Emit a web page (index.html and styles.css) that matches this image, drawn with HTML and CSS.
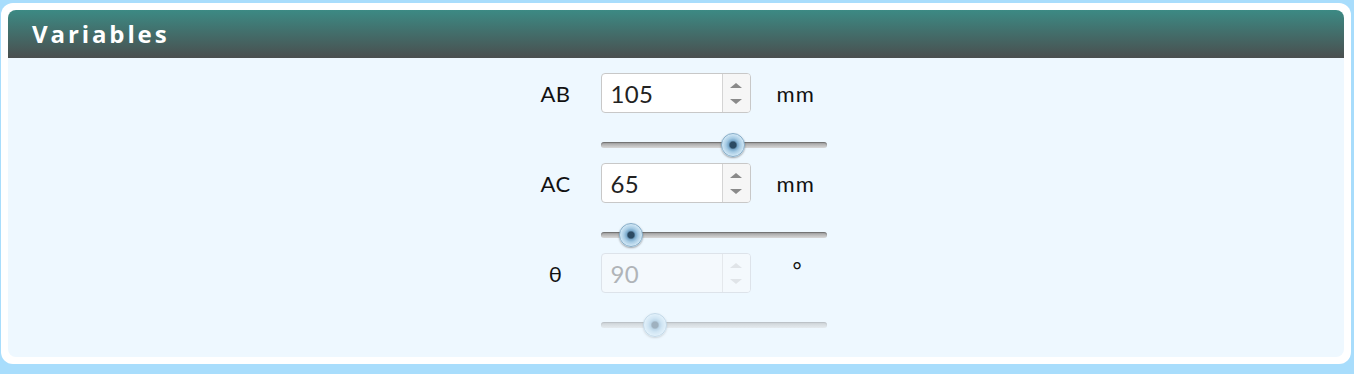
FILE: index.html
```html
<!DOCTYPE html>
<html lang="en">

<head>
    <meta charset="UTF-8">
    <title>Variables</title>
    <link rel="stylesheet" href="styles.css">
</head>

<body>

    <div class="card">
        <div class="card-header">Variables</div>
        <div class="card-body">
            <div class="vars">
                <!-- AB -->
                <div class="label">AB</div>
                <div class="num">
                    <input class="num-input" type="text" value="105">
                    <div class="spin"><span class="up"></span><span class="down"></span></div>
                </div>
                <div class="unit">mm</div>
                <div class="slider-cell">
                    <input class="slider" type="range" min="0" max="1000" value="598">
                </div>

                <!-- AC -->
                <div class="label">AC</div>
                <div class="num">
                    <input class="num-input" type="text" value="65">
                    <div class="spin"><span class="up"></span><span class="down"></span></div>
                </div>
                <div class="unit">mm</div>
                <div class="slider-cell">
                    <input class="slider" type="range" min="0" max="1000" value="93">
                </div>

                <!-- theta, disabled -->
                <div class="label">θ</div>
                <div class="num disabled">
                    <input class="num-input" type="text" value="90" disabled>
                    <div class="spin"><span class="up"></span><span class="down"></span></div>
                </div>
                <div class="unit deg">°</div>
                <div class="slider-cell disabled">
                    <input class="slider" type="range" min="0" max="1000" value="211" disabled>
                </div>
            </div>
        </div>
    </div>

</body>

</html>
```

FILE: styles.css
```css
body {
    margin: 0;
    padding: 3px 3px 8px 1px;
    background-color: #a8ddfc;
    font-family: "Nunito", Lato, "Open Sans", sans-serif;
}

.card {
    background-color: #fff;
    border-radius: 12px;
    padding: 7px;
}

.card-header {
    height: 48px;
    box-sizing: border-box;
    padding: 7px 0 0 24px;
    border-radius: 8px 8px 0 0;
    background: linear-gradient(#3c8a84, #4a4f4f);
    color: #fff;
    font-family: "Open Sans", sans-serif;
    font-weight: bold;
    font-size: 24px;
    letter-spacing: 2.9px;
}

.card-body {
    background-color: #eef8ff;
    border-radius: 0 0 8px 8px;
    padding: 15px 0 14px 0;
    display: flex;
    justify-content: center;
}

.vars {
    display: grid;
    grid-template-columns: 74px 150px 75px;
    grid-auto-rows: 40px 50px;
}

.label {
    display: flex;
    align-items: center;
    justify-content: center;
    padding-right: 16px;
    font-family: Lato, sans-serif;
    font-size: 22px;
    letter-spacing: 0.5px;
    color: #111;
}

.unit {
    display: flex;
    align-items: center;
    padding-left: 26px;
    font-family: Lato, sans-serif;
    font-size: 22px;
    letter-spacing: 1.2px;
    color: #111;
}

.deg {
    align-items: flex-start;
    padding-left: 42px;
    padding-top: 3px;
}

.num {
    display: flex;
    border: 1px solid #c8c8c8;
    border-radius: 4px;
    background-color: #fff;
    overflow: hidden;
}

.num-input {
    flex: 1;
    width: 0;
    border: none;
    outline: none;
    padding: 0 0 0 9px;
    font-family: Lato, sans-serif;
    font-size: 24px;
    letter-spacing: 0.3px;
    color: #222;
    background: transparent;
}

.spin {
    width: 27px;
    border-left: 1px solid #d4d4d4;
    background-color: #f6f6f6;
    display: flex;
    flex-direction: column;
    align-items: center;
    justify-content: center;
    gap: 11px;
}

.up {
    width: 0;
    height: 0;
    border-left: 6px solid transparent;
    border-right: 6px solid transparent;
    border-bottom: 5px solid #8a8a8a;
}

.down {
    width: 0;
    height: 0;
    border-left: 6px solid transparent;
    border-right: 6px solid transparent;
    border-top: 5px solid #8a8a8a;
}

.slider-cell {
    grid-column: 2 / 4;
    padding-top: 20px;
}

.slider {
    -webkit-appearance: none;
    appearance: none;
    display: block;
    width: 226px;
    height: 24px;
    margin: 0;
    background: transparent;
}

.slider::-webkit-slider-runnable-track {
    height: 6px;
    border-radius: 3px;
    background: linear-gradient(#9a9a9a, #d8d8d8);
    box-shadow: inset 0 1px 1px rgba(0, 0, 0, 0.3);
}

.slider::-webkit-slider-thumb {
    -webkit-appearance: none;
    width: 24px;
    height: 24px;
    margin-top: -9px;
    border-radius: 50%;
    border: 1px solid #86adc8;
    box-sizing: border-box;
    background: radial-gradient(circle, #2b4a62 0, #2b4a62 3px, #7aa9cb 4.5px, #a6cbe4 7px, #d2e8f6 11px);
    box-shadow: 0 1px 2px rgba(0, 0, 0, 0.35);
}

/* disabled row */
.slider-cell.disabled {
    opacity: 0.4;
}

.num.disabled {
    background-color: #f4f9fd;
    border-color: #dde3ea;
}

.num.disabled .num-input {
    color: #b0b4b8;
}

.num.disabled .spin {
    background-color: #f4f9fd;
    border-left-color: #e4e8ec;
}

.num.disabled .up {
    border-bottom-color: #e0e4e8;
}

.num.disabled .down {
    border-top-color: #e0e4e8;
}
```
